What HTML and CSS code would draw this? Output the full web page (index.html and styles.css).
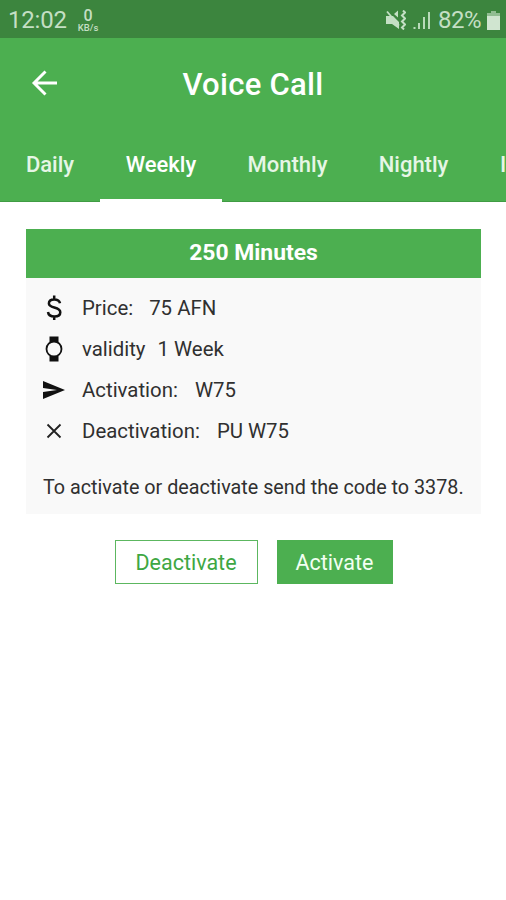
FILE: index.html
```html
<!DOCTYPE html>
<html lang="en">
<head>
<meta charset="utf-8">
<title>Voice Call</title>
<link rel="stylesheet" href="styles.css">
</head>
<body>
<div class="status">
  <span class="clock">12:02</span>
  <span class="speed"><b>0</b><small>KB/s</small></span>
  <svg class="mute" width="20" height="20" viewBox="0 0 20 20"><path d="M0 6h5l2 0 6 6v7l-7-5H0zM8 4l4-3.500v7z" fill="#c4dfc4"/><path d="M1 1.500l12 14" stroke="#c4dfc4" stroke-width="1.800"/><path d="M17 .5l2 2-3 3 3 3-3 3 3 3-3 3 2 2" fill="none" stroke="#c4dfc4" stroke-width="2"/></svg>
  <svg class="signal" width="18" height="19" viewBox="0 0 18 19"><path d="M1.500 16v2M6 12v6M11 6v12M16 1v17" stroke="#b9dab9" stroke-width="2"/></svg>
  <span class="percent">82%</span>
  <svg class="battery" width="13" height="19" viewBox="0 0 13 19"><path d="M4 0h5v2h4v17H0V2h4z" fill="#d0e5d0"/><path d="M4 0h5v2h4v3H0V2h4z" fill="#91bd92"/></svg>
</div>
<header class="header">
  <div class="bar">
    <svg class="back" width="28" height="28" viewBox="0 0 28 28"><path d="M26 14H3M14.500 2.500L3 14 14.500 25.500" fill="none" stroke="#fff" stroke-width="2.900"/></svg>
    <h1>Voice Call</h1>
  </div>
  <nav class="tabs">
    <span class="tab daily">Daily</span>
    <span class="tab weekly active">Weekly</span>
    <span class="tab monthly">Monthly</span>
    <span class="tab nightly">Nightly</span>
    <span class="tab next">I</span>
  </nav>
</header>
<main>
  <section class="card">
    <h2>250 Minutes</h2>
    <ul>
      <li><svg width="24" height="28" viewBox="0 0 24 28"><path d="M18 9.300C17.500 6.800 15.400 5.500 12.200 5.500 9 5.500 6.900 7 6.900 9.400c0 5.400 11.400 2.600 11.400 8.800 0 2.700-2.400 4.300-5.900 4.300-3.700 0-6-1.500-6.400-4.500M12.200 1.500v4.500M12.200 22v4" fill="none" stroke="#111" stroke-width="2.500"/></svg><span class="label">Price:</span><span class="value price">75 AFN</span></li>
      <li><svg width="24" height="28" viewBox="0 0 24 28"><path d="M7.500 1.500h9v5.500h-9zM7.500 21h9v5.500h-9z" fill="#111"/><circle cx="12" cy="14" r="7.500" fill="#fafafa" stroke="#111" stroke-width="1.800"/></svg><span class="label">validity</span><span class="value valid">1 Week</span></li>
      <li><svg width="24" height="28" viewBox="0 0 24 28"><path d="M1 5l22 9-22 9v-7l14-2-14-2z" fill="#111"/></svg><span class="label">Activation:</span><span class="value on">W75</span></li>
      <li><svg width="24" height="28" viewBox="0 0 24 28"><path d="M5.500 7.500l13 13M18.500 7.500l-13 13" stroke="#222" stroke-width="1.800"/></svg><span class="label">Deactivation:</span><span class="value off">PU W75</span></li>
    </ul>
    <p>To activate or deactivate send the code to 3378.</p>
  </section>
  <div class="actions">
    <button class="outline">Deactivate</button>
    <button class="solid">Activate</button>
  </div>
</main>
</body>
</html>
```
FILE: styles.css
```css
* { box-sizing: border-box; }
body { margin: 0; background: #fff; font-family: Roboto, sans-serif; height: 900px; overflow: hidden; color: #303030; }
.status { height: 38px; background: #3c853e; color: #c4dfc4; display: flex; align-items: center; padding: 2px 6px 0 8px; }
.clock { font-size: 24px; line-height: 36px; letter-spacing: -0.2px; width: 68px; }
.speed { display: flex; flex-direction: column; align-items: center; width: 24px; }
.speed b { font-size: 16px; line-height: 15px; font-weight: 500; }
.speed small { font-size: 9.500px; line-height: 10px; font-weight: 500; }
.mute { margin-left: auto; }
.signal { margin-left: 7px; }
.percent { font-size: 24px; line-height: 36px; width: 45px; margin: 0 4px 0 7px; letter-spacing: -0.5px; }
.header { height: 164px; background: #4caf50; color: #fff; box-shadow: inset 0 -1px #409c44; }
.bar { height: 90px; display: grid; grid-template-columns: 60px 1fr 60px; align-items: center; }
.back { margin-left: 31px; }
h1 { margin: 3px 0 0; text-align: center; font-size: 31px; line-height: 40px; font-weight: 500; letter-spacing: 0.3px; }
.tabs { display: flex; height: 74px; overflow: hidden; }
.tab { flex: none; height: 74px; padding: 21px 0 0; text-align: center; font-size: 22px; line-height: 32px; font-weight: 500; color: #e6f6e6; }
.daily { width: 100px; }
.weekly { width: 122px; }
.monthly { width: 131px; }
.nightly { width: 121px; }
.next { width: 32px; padding-left: 26px; text-align: left; }
.active { color: #fff; border-bottom: 3px solid #fff; }
main { padding: 27px 25px 0 26px; }
.card { background: #f9f9f9; height: 285px; }
h2 { margin: 0; height: 49px; background: #4caf50; color: #fff; text-align: center; font-size: 22.900px; line-height: 48px; font-weight: 700; }
ul { list-style: none; margin: 0; padding: 9px 0 0 16px; }
li { height: 41px; display: flex; align-items: center; font-size: 20.400px; line-height: 28px; }
.label { margin-left: 16px; }
.value { margin-left: 17px; }
.price { margin-left: 16px; }
.valid { margin-left: 12px; }
p { margin: 22px 0 0 17px; font-size: 19.750px; line-height: 30px; white-space: nowrap; }
.actions { display: flex; justify-content: center; gap: 19px; margin-top: 26px; }
button { font: 400 21.500px/28px Roboto, sans-serif; height: 44px; padding: 2px 0 0; }
.outline { width: 143px; color: #3ea743; background: #fff; border: 1.500px solid #5cb760; }
.solid { width: 116px; color: #f2fff2; background: #4caf50; border: 0; }
```
